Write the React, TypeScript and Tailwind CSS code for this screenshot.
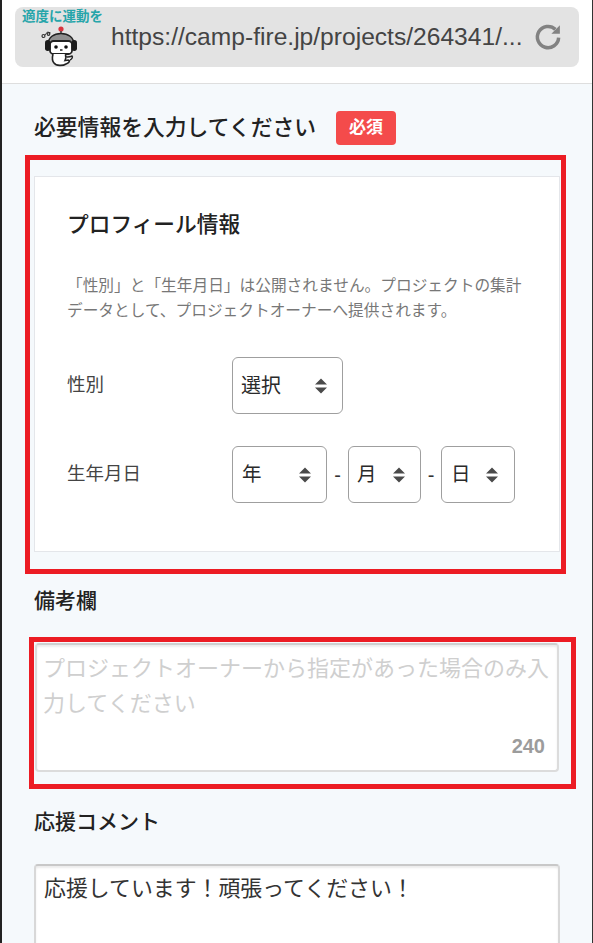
const jp = "font-['Liberation_Sans','Noto_Sans_CJK_JP',sans-serif]";

function Carets({ className }: { className: string }) {
  return (
    <svg viewBox="0 0 12 16" className={`pointer-events-none absolute top-1/2 h-[16px] w-[12px] -translate-y-1/2 ${className}`}>
      <path d="M6 0.5 12 6.5H0Z M6 15.5 12 9.5H0Z" fill="#4a4a4a" />
    </svg>
  );
}

function Picker({ label, width, pad, caret, size }: { label: string; width: string; pad: string; caret: string; size: string }) {
  return (
    <div className={`relative h-[57px] shrink-0 ${width}`}>
      <select
        aria-label={label}
        defaultValue={label}
        className={`h-full w-full appearance-none rounded-[6px] border-[1.500px] border-[#9f9f9f] bg-white text-[#2a2a2a] ${pad} ${size}`}
      >
        <option>{label}</option>
      </select>
      <Carets className={caret} />
    </div>
  );
}

function Robot() {
  return (
    <svg viewBox="0 0 44 44" className="h-[44px] w-[44px]">
      <path d="M4.500 11.500 7.500 8l3 .8" fill="none" stroke="#333" strokeWidth="1" />
      <circle cx="3.500" cy="12" r="1.500" fill="none" stroke="#333" strokeWidth="1.200" />
      <circle cx="8.500" cy="10" r="1.300" fill="none" stroke="#333" strokeWidth="1.200" />
      <circle cx="21" cy="5" r="2.600" fill="#d9363e" />
      <path d="M21 7v3" stroke="#333" strokeWidth="1.400" />
      <path d="M8 21C8 13 14 9.500 21 9.500S34 13 34 21Z" fill="#8f8f8f" stroke="#222" strokeWidth="1.500" />
      <rect x="10" y="17" width="22" height="13" rx="3.500" fill="#fff" stroke="#222" strokeWidth="1.800" />
      <rect x="5" y="16" width="5.500" height="11" rx="2.700" fill="#1b1b1b" />
      <rect x="31.500" y="16" width="5.500" height="11" rx="2.700" fill="#1b1b1b" />
      <circle cx="16" cy="23" r="1.800" fill="#111" />
      <circle cx="26" cy="23" r="1.800" fill="#111" />
      <path d="M20 26h2.500" stroke="#111" strokeWidth="1.400" />
      <path d="M13 30c-1 4-1 7 1 9 2 3 9 3 12 1 3-1 4-3 3-4l-4 .5c1-2 1-4 .5-6.500" fill="#fff" stroke="#222" strokeWidth="1.600" />
      <path d="M25 33c3 0 6 0 7-1 1 1 0 3-2 4" fill="#fff" stroke="#222" strokeWidth="1.500" />
    </svg>
  );
}

export default function App() {
  return (
    <div className={`h-[943px] w-[593px] overflow-hidden border-r border-l-2 border-r-[#333] border-l-[#222] bg-[#f5f9fc] ${jp}`}>
      <header className="h-[84px] border-b border-[#dedede] bg-white px-[13px] pt-[7px]">
        <div className="flex h-[60px] items-center rounded-[8px] bg-[#e3e3e3]">
          <div className="flex w-[96px] shrink-0 flex-col pt-[2px] pl-[7px]">
            <span className="text-[13.500px] leading-[15px] font-bold whitespace-nowrap text-[#26a5aa]">適度に運動を</span>
            <div className="mt-0 ml-[18px]">
              <Robot />
            </div>
          </div>
          <span className="text-[24.600px] leading-none whitespace-nowrap text-[#444]">https://camp-fire.jp/projects/264341/...</span>
          <svg viewBox="0 0 24 24" className="ml-[11px] h-[30px] w-[30px] shrink-0" fill="none" stroke="#828282" strokeWidth="2.800">
            <path d="M20.500 12.500a8.500 8.500 0 1 1-2.600-6.600" />
            <path d="M21.500 2.500v6.800h-6.800Z" fill="#828282" stroke="none" />
          </svg>
        </div>
      </header>

      <main>
        <div className="mt-[27px] ml-[32px] flex h-[34px] items-center">
          <h1 className="text-[21.800px] font-medium text-[#222]">必要情報を入力してください</h1>
          <span className="ml-[20px] flex h-[34px] w-[60px] items-center justify-center rounded-[4px] bg-[#f44b4b] text-[17px] font-bold text-white">必須</span>
        </div>

        <div className="mt-[10px] ml-[23px] h-[419px] w-[541px] border-[5px] border-[#ec1c24] pt-[16px] pl-[4px]">
          <section className="h-[376px] w-[526px] border border-[#e4e6ea] bg-white pt-[33px] pl-[32px]">
            <h2 className="text-[21.700px] leading-[30px] font-medium text-[#222]">プロフィール情報</h2>
            <p className="mt-[33px] w-[470px] text-[15.700px] leading-[25px] text-[#777]">
              「性別」と「生年月日」は公開されません。プロジェクトの集計データとして、プロジェクトオーナーへ提供されます。
            </p>
            <div className="mt-[34px] flex items-center">
              <span className="w-[165px] -translate-y-[1px] text-[18.500px] text-[#444]">性別</span>
              <Picker label="選択" width="w-[111px]" pad="pl-[8px]" caret="right-[16px]" size="text-[20px]" />
            </div>
            <div className="mt-[32px] flex items-center">
              <span className="w-[165px] -translate-y-[1px] text-[18.500px] text-[#444]">生年月日</span>
              <Picker label="年" width="w-[95px]" pad="pl-[9px]" caret="right-[16px]" size="text-[19.500px]" />
              <span className="w-[21px] text-center text-[20px] text-[#333]">-</span>
              <Picker label="月" width="w-[73px]" pad="pl-[8px]" caret="right-[16px]" size="text-[19.500px]" />
              <span className="w-[20px] text-center text-[20px] text-[#333]">-</span>
              <Picker label="日" width="w-[74px]" pad="pl-[9px]" caret="right-[17px]" size="text-[19.500px]" />
            </div>
          </section>
        </div>

        <h2 className="mt-[12px] ml-[32px] text-[21px] leading-[30px] font-medium text-[#222]">備考欄</h2>

        <div className="mt-[21px] ml-[27px] h-[152px] w-[547px] border-[5px] border-[#ec1c24] pt-[1px] pl-[1px]">
          <div className="relative h-[129px] w-[524px]">
            <textarea
              placeholder="プロジェクトオーナーから指定があった場合のみ入力してください"
              className="h-full w-full resize-none rounded-[4px] border-2 border-[#dcdcdc] border-t-[#cfcfcf] bg-white pt-[6px] pr-[3px] pl-[6px] text-[22px] leading-[35px] shadow-[inset_0_2px_2px_rgba(0,0,0,0.08)] placeholder:text-[#cfcfcf]"
            />
            <span className="absolute right-[14px] bottom-[14px] text-[20px] leading-[24px] font-bold text-[#9c9c9c]">240</span>
          </div>
        </div>

        <h2 className="mt-[18px] ml-[32px] text-[21px] leading-[30px] font-medium text-[#222]">応援コメント</h2>

        <textarea
          defaultValue={"応援しています\uFF01頑張ってください\uFF01"}
          className="mt-[27px] ml-[32px] block h-[110px] w-[526px] resize-none rounded-[4px] border-2 border-[#d8d8d8] border-t-[#c8c8c8] bg-white px-[8px] pt-[4px] text-[21.900px] leading-[38px] text-[#333] shadow-[inset_0_2px_2px_rgba(0,0,0,0.08)]"
        />
      </main>
    </div>
  );
}
